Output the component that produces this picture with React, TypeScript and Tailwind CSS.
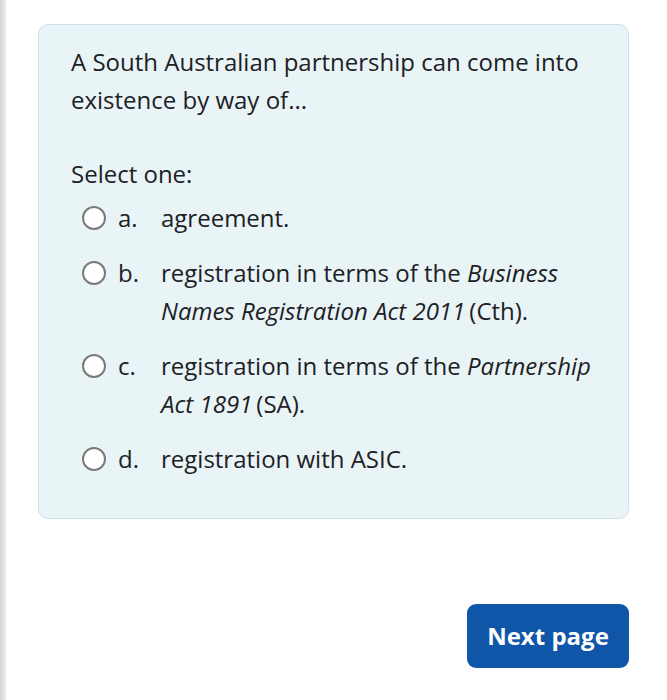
import React from "react";

const options = [
  { letter: "a.", content: <>agreement.</> },
  {
    letter: "b.",
    content: (
      <>
        registration in terms of the <i className="pr-[4px]">Business Names Registration Act 2011</i>(Cth).
      </>
    ),
  },
  {
    letter: "c.",
    content: (
      <>
        registration in terms of the <i className="pr-[4px]">Partnership Act 1891</i>(SA).
      </>
    ),
  },
  { letter: "d.", content: <>registration with ASIC.</> },
];

function Radio() {
  return <span className="mt-[7px] h-6 w-6 shrink-0 rounded-full border-[2.5px] border-[#7a7a7a] bg-white" />;
}

export default function App() {
  return (
    <div
      className="flex min-h-[700px] bg-white text-[#1d2125]"
      style={{ fontFamily: '"Open Sans", "Noto Sans", sans-serif' }}
    >
      <div className="w-[6px] shrink-0 bg-gradient-to-r from-[#d6d6d6] to-[#ececec]" />
      <div className="flex w-[623px] flex-col pl-[32px] pt-[24px]">
        <div className="rounded-[10px] border border-[#cfe2e9] bg-[#e9f4f7] pb-[40px] pl-[32px] pr-[24px] pt-[18px] text-[24px] leading-[38px]">
          <p>A South Australian partnership can come into existence by way of...</p>
          <p className="mt-[36px]">Select one:</p>
          <div className="mt-[6px] flex flex-col gap-[17px] pl-[11px]">
            {options.map((o) => (
              <div key={o.letter} className="flex items-start">
                <Radio />
                <span className="ml-[12px] w-[43px] shrink-0">{o.letter}</span>
                <span>{o.content}</span>
              </div>
            ))}
          </div>
        </div>
        <div className="mt-[85px] flex justify-end">
          <button className="h-[64px] w-[162px] rounded-[9px] bg-[#0f56a8] text-[24px] font-bold text-white">
            Next page
          </button>
        </div>
      </div>
    </div>
  );
}
